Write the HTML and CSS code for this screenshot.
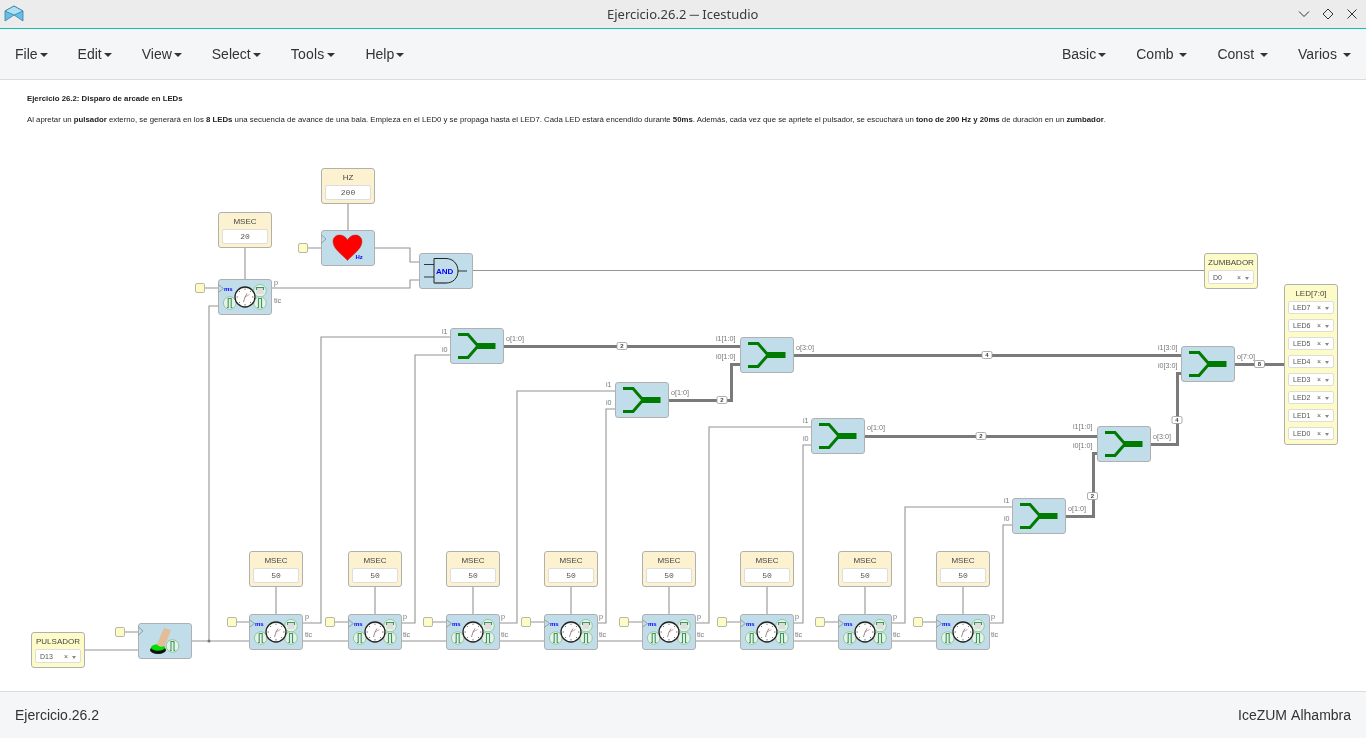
FILE: index.html
```html
<!DOCTYPE html>
<html lang="es">
<head>
<meta charset="utf-8">
<title>Ejercicio.26.2 ─ Icestudio</title>
<link rel="stylesheet" href="styles.css">
</head>
<body>
<svg class="defs" width="0" height="0" aria-hidden="true">
  <defs>
    <symbol id="clock" viewBox="0 0 54 36">
      <path d="M0 5.500L5.500 9.500L0 13.500" fill="none" stroke="#8a9aa3" stroke-width="0.9"/>
      <circle class="pdisc" cx="11.700" cy="24" r="6.300"/>
      <circle class="pdisc" cx="42" cy="11.700" r="6.300"/>
      <circle class="pdisc" cx="42" cy="24" r="6.300"/>
      <rect x="38.500" y="9" width="7" height="6" fill="#dedede"/>
      <path class="ptrace" d="M9 28.500H10.200V19.500H13.200V28.500H14.400"/>
      <path class="ptrace" d="M38 10.500H38.500V8.500H45.500V10.500H46"/>
      <path class="ptrace" d="M39.300 28.500H40.500V19.500H43.500V28.500H44.700"/>
      <circle cx="27" cy="18" r="10" fill="#fff" stroke="#222" stroke-width="1.300"/>
      <path d="M27 9.500V11M27 25V26.500M18.500 18H20M34 18H35.500M21 12L22 13M32 23L33 24M21 24L22 23M32 13L33 12" stroke="#444" stroke-width="0.7"/>
      <path d="M27 18L25.500 23M27 18L29 14.500" stroke="#666" stroke-width="0.7"/>
      <path d="M27 18L31.500 15.500" stroke="#d33" stroke-width="0.5"/>
      <text class="ms" x="6" y="12">ms</text>
    </symbol>
    <symbol id="join" viewBox="0 0 54 36">
      <path d="M8 6.500H18L28 18L18 29.500H8" fill="none" stroke="#007a00" stroke-width="3"/>
      <path d="M26 18H45.500" fill="none" stroke="#007a00" stroke-width="6"/>
    </symbol>
    <symbol id="heart" viewBox="0 0 54 36">
      <path d="M0 4.500L5 9L0 13.500" fill="none" stroke="#8a9aa3" stroke-width="0.9"/>
      <path d="M26.500 30.500C23 26 12 19.500 12 11.500C12 7.500 15 5 18.500 5C22 5 25 7 26.500 10C28 7 31 5 34.500 5C38 5 41 7.500 41 11.500C41 19.500 30 26 26.500 30.500Z" fill="#f00" stroke="#a33" stroke-width="0.5"/>
      <text class="hz" x="34.500" y="29">Hz</text>
    </symbol>
    <symbol id="and" viewBox="0 0 54 36">
      <path d="M5 11.500H15M5 24H15M39 18H48" stroke="#222" stroke-width="0.9" fill="none"/>
      <path d="M15 5.500H27C34 5.500 39 11 39 18C39 25 34 30 27 30H15Z" fill="#c1dde9" stroke="#222" stroke-width="1"/>
      <path d="M15.500 30H27" stroke="#667" stroke-width="1.300" fill="none"/>
      <text class="andtxt" x="17" y="20.500">AND</text>
    </symbol>
    <symbol id="push" viewBox="0 0 54 36">
      <path d="M0 3.500L5 8L0 12.500" fill="none" stroke="#8a9aa3" stroke-width="0.9"/>
      <ellipse cx="20" cy="27" rx="8" ry="4" fill="#111"/>
      <ellipse cx="20" cy="24.500" rx="7" ry="3.300" fill="#0d0"/>
      <path d="M26 5L33 7L27 22C25 25 20 24 19 21Z" fill="#e3bd98"/>
      <circle class="pdisc" cx="34.500" cy="23" r="6.300"/>
      <path class="ptrace" d="M31.800 27.500H33V18.500H36V27.500H37.200"/>
    </symbol>
  </defs>
</svg>

<header class="titlebar">
  <svg class="applogo" viewBox="0 0 20 18">
    <path d="M1 6L10 1L10 10L1 16Z" fill="#63bfe8" stroke="#3f7f9f" stroke-width="0.8"/>
    <path d="M19 6L10 1L10 10L19 16Z" fill="#63bfe8" stroke="#3f7f9f" stroke-width="0.8"/>
    <path d="M1 6L10 10L19 6L10 1Z" fill="#aee0f4" stroke="#3f7f9f" stroke-width="0.8"/>
  </svg>
  <span class="wintitle">Ejercicio.26.2 ─ Icestudio</span>
  <div class="winctl">
    <svg viewBox="0 0 12 12"><path d="M1 3.500L6 8.500L11 3.500"/></svg>
    <svg viewBox="0 0 12 12"><path d="M6 1L11 6L6 11L1 6Z"/></svg>
    <svg viewBox="0 0 12 12"><path d="M1.500 1.500L10.500 10.500M10.500 1.500L1.500 10.500"/></svg>
  </div>
</header>

<nav class="menubar">
  <ul class="menu">
    <li>File<i class="caret"></i></li>
    <li>Edit<i class="caret"></i></li>
    <li>View<i class="caret"></i></li>
    <li>Select<i class="caret"></i></li>
    <li class="m-tools">Tools<i class="caret"></i></li>
    <li>Help<i class="caret"></i></li>
  </ul>
  <ul class="menu">
    <li>Basic<i class="caret"></i></li>
    <li>Comb <i class="caret"></i></li>
    <li>Const <i class="caret"></i></li>
    <li class="m-varios">Varios <i class="caret"></i></li>
  </ul>
</nav>

<main class="canvas">
  <svg class="wires" viewBox="0 80 1366 611">
    <g class="wire">
      <path d="M85 650H138M125 632H138M192 641H249M209 641V306H218M205 288H218M308 248H321"/>
      <path d="M245 248V279M348 204V230M375 248H410V262H419M272 288H410V280H419M473 270.500H1204"/>
      <path d="M276 587V614M375 587V614M473 587V614M571 587V614M669 587V614M767 587V614M865 587V614M963 587V614"/>
      <path d="M237 622H249M335 622H348M433 622H446M531 622H544M629 622H642M727 622H740M825 622H838M923 622H936"/>
      <path d="M303 641H348M402 641H446M500 641H544M598 641H642M696 641H740M794 641H838M892 641H936"/>
      <path d="M303 623H321V337H450M402 623H415V355H450M500 623H517V391H615M598 623H606V409H615"/>
      <path d="M696 623H709V427H811M794 623H803V445H811M892 623H905V507H1012M990 623H1003V525H1012"/>
    </g>
    <circle class="junction" cx="209" cy="641" r="1.500"/>
    <g class="bus">
      <path d="M504 346H740M669 400H731V364H740M794 355H1181M865 436H1097"/>
      <path d="M1066 516H1093V453H1097M1151 444H1177V373H1181M1235 364H1284"/>
    </g>
    <g class="badge">
      <rect x="617" y="342.500" width="10" height="7" rx="1.500"/><text x="622" y="348">2</text>
      <rect x="717" y="396.500" width="10" height="7" rx="1.500"/><text x="722" y="402">2</text>
      <rect x="982" y="351.500" width="10" height="7" rx="1.500"/><text x="987" y="357">4</text>
      <rect x="976" y="432.500" width="10" height="7" rx="1.500"/><text x="981" y="438">2</text>
      <rect x="1087.500" y="492.500" width="10" height="7" rx="1.500"/><text x="1092.500" y="498">2</text>
      <rect x="1172" y="416.500" width="10" height="7" rx="1.500"/><text x="1177" y="422">4</text>
      <rect x="1254.500" y="360.500" width="10" height="7" rx="1.500"/><text x="1259.500" y="366">8</text>
    </g>
    <g class="port">
      <text x="274" y="285">p</text><text x="274" y="303">tic</text>
      <text x="305" y="619">p</text><text x="305" y="637">tic</text>
      <text x="403" y="619">p</text><text x="403" y="637">tic</text>
      <text x="501" y="619">p</text><text x="501" y="637">tic</text>
      <text x="599" y="619">p</text><text x="599" y="637">tic</text>
      <text x="697" y="619">p</text><text x="697" y="637">tic</text>
      <text x="795" y="619">p</text><text x="795" y="637">tic</text>
      <text x="893" y="619">p</text><text x="893" y="637">tic</text>
      <text x="991" y="619">p</text><text x="991" y="637">tic</text>
      <text x="442" y="334">i1</text><text x="442" y="352">i0</text><text x="506" y="341">o[1:0]</text>
      <text x="606" y="387">i1</text><text x="606" y="405">i0</text><text x="671" y="395">o[1:0]</text>
      <text x="803" y="423">i1</text><text x="803" y="441">i0</text><text x="867" y="430">o[1:0]</text>
      <text x="1004" y="503">i1</text><text x="1004" y="521">i0</text><text x="1068" y="511">o[1:0]</text>
      <text x="716" y="341">i1[1:0]</text><text x="716" y="359">i0[1:0]</text><text x="796" y="350">o[3:0]</text>
      <text x="1073" y="429">i1[1:0]</text><text x="1073" y="448">i0[1:0]</text><text x="1153" y="439">o[3:0]</text>
      <text x="1158" y="350">i1[3:0]</text><text x="1158" y="368">i0[3:0]</text><text x="1237" y="359">o[7:0]</text>
    </g>
  </svg>

  <section class="notes">
    <p><b>Ejercicio 26.2: Disparo de arcade en LEDs</b></p>
    <p>Al apretar un <b>pulsador</b> externo, se generará en los <b>8 LEDs</b> una secuencia de avance de una bala. Empieza en el LED0 y se propaga hasta el LED7. Cada LED estará encendido durante <b>50ms</b>. Además, cada vez que se apriete el pulsador, se escuchará un <b>tono de 200 Hz y 20ms</b> de duración en un <b>zumbador</b>.</p>
  </section>

  <i class="pin p1"></i><i class="pin p2"></i><i class="pin p3"></i>
  <i class="pin p4"></i><i class="pin p5"></i><i class="pin p6"></i><i class="pin p7"></i>
  <i class="pin p8"></i><i class="pin p9"></i><i class="pin p10"></i><i class="pin p11"></i>

  <div class="const k-hz"><span>HZ</span><output>200</output></div>
  <div class="const k-ms20"><span>MSEC</span><output>20</output></div>
  <div class="const k1"><span>MSEC</span><output>50</output></div>
  <div class="const k2"><span>MSEC</span><output>50</output></div>
  <div class="const k3"><span>MSEC</span><output>50</output></div>
  <div class="const k4"><span>MSEC</span><output>50</output></div>
  <div class="const k5"><span>MSEC</span><output>50</output></div>
  <div class="const k6"><span>MSEC</span><output>50</output></div>
  <div class="const k7"><span>MSEC</span><output>50</output></div>
  <div class="const k8"><span>MSEC</span><output>50</output></div>

  <div class="block b-heart"><svg><use href="#heart"/></svg></div>
  <div class="block b-and"><svg><use href="#and"/></svg></div>
  <div class="block b-push"><svg><use href="#push"/></svg></div>
  <div class="block b-tick"><svg><use href="#clock"/></svg></div>
  <div class="block t1"><svg><use href="#clock"/></svg></div>
  <div class="block t2"><svg><use href="#clock"/></svg></div>
  <div class="block t3"><svg><use href="#clock"/></svg></div>
  <div class="block t4"><svg><use href="#clock"/></svg></div>
  <div class="block t5"><svg><use href="#clock"/></svg></div>
  <div class="block t6"><svg><use href="#clock"/></svg></div>
  <div class="block t7"><svg><use href="#clock"/></svg></div>
  <div class="block t8"><svg><use href="#clock"/></svg></div>
  <div class="block j1"><svg><use href="#join"/></svg></div>
  <div class="block j2"><svg><use href="#join"/></svg></div>
  <div class="block j3"><svg><use href="#join"/></svg></div>
  <div class="block j4"><svg><use href="#join"/></svg></div>
  <div class="block j5"><svg><use href="#join"/></svg></div>
  <div class="block j6"><svg><use href="#join"/></svg></div>
  <div class="block j7"><svg><use href="#join"/></svg></div>

  <div class="io io-pulsador"><span>PULSADOR</span><div class="sel"><em>D13</em><small>×</small><u></u></div></div>
  <div class="io io-zumbador"><span>ZUMBADOR</span><div class="sel"><em>D0</em><small>×</small><u></u></div></div>
  <div class="io io-led">
    <span>LED[7:0]</span>
    <div class="sel"><em>LED7</em><small>×</small><u></u></div>
    <div class="sel"><em>LED6</em><small>×</small><u></u></div>
    <div class="sel"><em>LED5</em><small>×</small><u></u></div>
    <div class="sel"><em>LED4</em><small>×</small><u></u></div>
    <div class="sel"><em>LED3</em><small>×</small><u></u></div>
    <div class="sel"><em>LED2</em><small>×</small><u></u></div>
    <div class="sel"><em>LED1</em><small>×</small><u></u></div>
    <div class="sel"><em>LED0</em><small>×</small><u></u></div>
  </div>
</main>

<footer class="statusbar">
  <span>Ejercicio.26.2</span>
  <span class="board">IceZUM Alhambra</span>
</footer>
</body>
</html>
```

FILE: styles.css
```css
* { box-sizing: border-box; }
html, body { margin: 0; height: 100%; overflow: hidden; }
body {
  display: flex;
  flex-direction: column;
  height: 738px;
  background: #fff;
  color: #333;
  font-family: "Liberation Sans", Arial, sans-serif;
}
.defs { position: absolute; }
.pdisc { fill: #e4f3e5; stroke: #97c59f; stroke-width: 1; }
.ptrace { fill: none; stroke: #3f9463; stroke-width: 1.1; }

.titlebar {
  height: 29px;
  flex: none;
  display: flex;
  align-items: center;
  justify-content: center;
  position: relative;
  background: #ececec;
  border-bottom: 1px solid #14bfa5;
}
.applogo { position: absolute; left: 4px; top: 5px; width: 20px; height: 18px; }
.wintitle { font: 13px "Noto Sans", sans-serif; color: #3a3a3a; will-change: transform; }
.winctl {
  position: absolute;
  right: 8px;
  top: 8px;
  display: flex;
  gap: 12px;
}
.winctl svg { width: 12px; height: 12px; fill: none; stroke: #333; stroke-width: 1; }

.menubar {
  height: 51px;
  flex: none;
  display: flex;
  justify-content: space-between;
  background: #f5f6f8;
  border-bottom: 1px solid #dcdcdc;
}
.menu { display: flex; margin: 0; padding: 0; list-style: none; will-change: transform; }
.menu li {
  padding: 0 15px;
  font-size: 14px;
  line-height: 50px;
  white-space: pre;
  color: #333;
}
.menu .m-tools { letter-spacing: 0.2px; }
.menu .m-tools .caret { margin-left: 3px; }
.menu .m-varios { letter-spacing: 0.08px; }
.caret {
  display: inline-block;
  margin-left: 2px;
  vertical-align: middle;
  border-top: 4px solid #333;
  border-left: 4px solid transparent;
  border-right: 4px solid transparent;
}

.canvas { position: relative; flex: 1; background: #fff; overflow: hidden; }
.wires { position: absolute; left: 0; top: 0; width: 1366px; height: 611px; will-change: transform; }
.wire path { fill: none; stroke: #949494; stroke-width: 1.1; }
.junction { fill: #777; }
.bus path { fill: none; stroke: #7a7a7a; stroke-width: 3; shape-rendering: crispEdges; }
.badge rect { fill: #fff; stroke: #999; stroke-width: 0.8; }
.badge text { font: bold 6px "Liberation Sans", sans-serif; fill: #444; text-anchor: middle; }
.port text { font: 7.2px "Liberation Sans", sans-serif; fill: #777; }

.notes {
  position: absolute;
  left: 27px;
  top: 14px;
  width: 1200px;
  font-size: 7.815px;
  line-height: 10px;
  color: #222;
  will-change: transform;
}
.notes p { margin: 0 0 11px; }

.pin {
  position: absolute;
  width: 10px;
  height: 10px;
  background: #fdfcc8;
  border: 1px solid #b9b9a0;
  border-radius: 2px;
}
.p1 { left: 298px; top: 163px; }
.p2 { left: 195px; top: 203px; }
.p3 { left: 115px; top: 547px; }
.p4 { left: 227px; top: 537px; }
.p5 { left: 325px; top: 537px; }
.p6 { left: 423px; top: 537px; }
.p7 { left: 521px; top: 537px; }
.p8 { left: 619px; top: 537px; }
.p9 { left: 717px; top: 537px; }
.p10 { left: 815px; top: 537px; }
.p11 { left: 913px; top: 537px; }

.const, .block, .io {
  position: absolute;
  width: 54px;
  height: 36px;
  border: 1px solid #b0b0b0;
  border-radius: 3px;
}
.const, .io {
  display: flex;
  flex-direction: column;
  align-items: center;
  font-size: 8px;
  color: #444;
  will-change: transform;
}
.const { background: #fdf2cf; padding: 4px 3px 3px; }
.const span { line-height: 10px; }
.const output {
  align-self: stretch;
  height: 15px;
  margin-top: 2px;
  background: #fff;
  border: 1px solid #ddd;
  border-radius: 2px;
  font: 8px/13px "Liberation Mono", monospace;
  text-align: center;
  color: #555;
}
.k-hz { left: 321px; top: 88px; }
.k-ms20 { left: 218px; top: 132px; }
.k1 { left: 249px; top: 471px; }
.k2 { left: 348px; top: 471px; }
.k3 { left: 446px; top: 471px; }
.k4 { left: 544px; top: 471px; }
.k5 { left: 642px; top: 471px; }
.k6 { left: 740px; top: 471px; }
.k7 { left: 838px; top: 471px; }
.k8 { left: 936px; top: 471px; }

.block { background: #c1dde9; }
.block svg { position: absolute; left: -1px; top: -1px; width: 54px; height: 36px; overflow: visible; }
.ms, .hz { font: bold 6px "Liberation Sans", sans-serif; fill: #00f; }
.andtxt { font: bold 8px "Liberation Sans", sans-serif; fill: #00f; }
.b-heart { left: 321px; top: 150px; }
.b-and { left: 419px; top: 173px; }
.b-push { left: 138px; top: 543px; }
.b-tick { left: 218px; top: 199px; }
.t1 { left: 249px; top: 534px; }
.t2 { left: 348px; top: 534px; }
.t3 { left: 446px; top: 534px; }
.t4 { left: 544px; top: 534px; }
.t5 { left: 642px; top: 534px; }
.t6 { left: 740px; top: 534px; }
.t7 { left: 838px; top: 534px; }
.t8 { left: 936px; top: 534px; }
.j1 { left: 450px; top: 248px; }
.j2 { left: 740px; top: 257px; }
.j3 { left: 1181px; top: 266px; }
.j4 { left: 615px; top: 302px; }
.j5 { left: 811px; top: 338px; }
.j6 { left: 1097px; top: 346px; }
.j7 { left: 1012px; top: 418px; }

.io { background: #fdfcc8; padding: 4px 3px 3px; }
.io span { line-height: 10px; }
.sel {
  align-self: stretch;
  height: 14px;
  margin-top: 2px;
  padding: 0 4px;
  display: flex;
  align-items: center;
  background: #fff;
  border: 1px solid #ddd;
  border-radius: 2px;
  font-size: 7px;
  color: #555;
}
.sel em { font-style: normal; flex: 1; }
.sel small { font-size: 7px; margin-right: 4px; }
.sel u {
  margin-top: 2px;
  border-top: 3px solid #888;
  border-left: 2px solid transparent;
  border-right: 2px solid transparent;
}
.io-pulsador { left: 31px; top: 552px; }
.io-zumbador { left: 1204px; top: 173px; }
.io-led { left: 1284px; top: 204px; height: 161px; }
.io-led .sel { height: 13px; margin-top: 5px; }
.io-led span + .sel { margin-top: 2px; }

.statusbar {
  height: 47px;
  flex: none;
  display: flex;
  align-items: center;
  justify-content: space-between;
  padding: 0 15px;
  background: #f5f6f8;
  border-top: 1px solid #dcdcdc;
  font-size: 14px;
  color: #333;
}
.statusbar span { will-change: transform; }
.board { word-spacing: 1px; }
```
